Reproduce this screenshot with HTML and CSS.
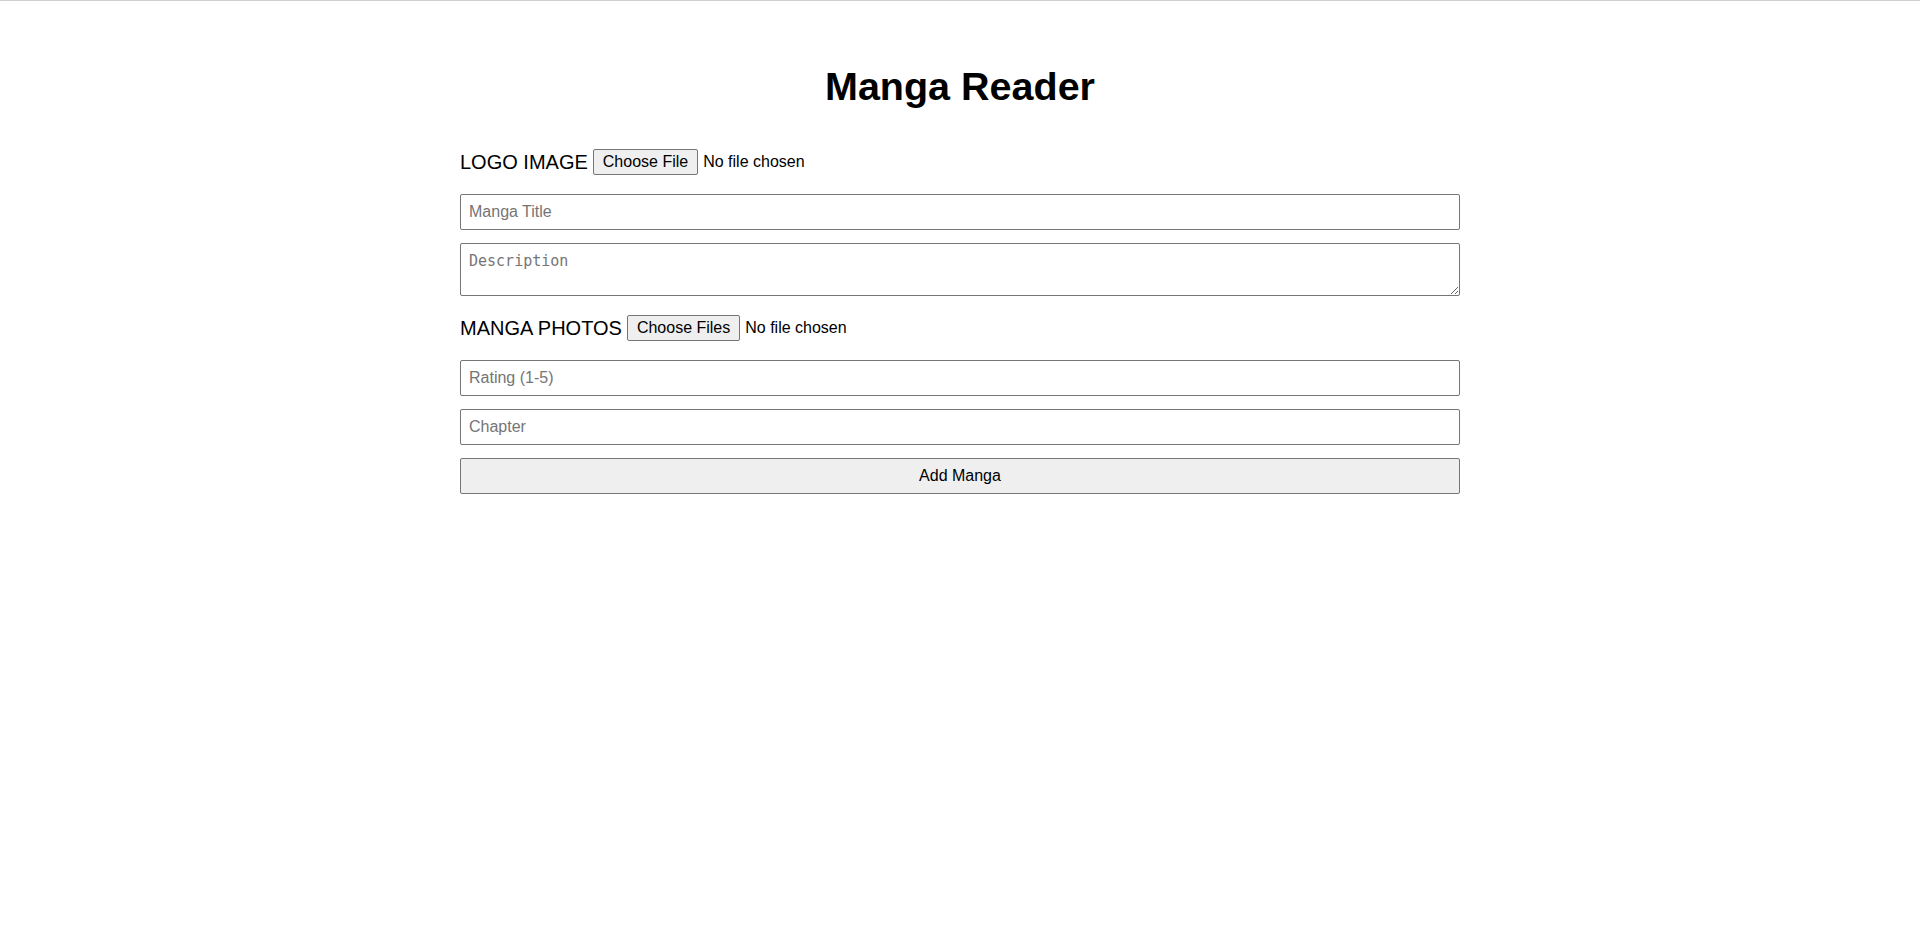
FILE: index.html
```html
<!DOCTYPE html>
<html lang="en">
<head>
<meta charset="utf-8">
<title>Manga Reader</title>
<link rel="stylesheet" href="styles.css">
</head>
<body>
<div class="container">
  <h1 class="title">Manga Reader</h1>
  <form class="manga-form">
    <div class="file-row">
      <label class="file-label" for="logo">LOGO IMAGE</label>
      <input class="file-input" type="file" id="logo">
    </div>
    <input class="field" type="text" placeholder="Manga Title">
    <textarea class="field area" placeholder="Description"></textarea>
    <div class="file-row">
      <label class="file-label" for="photos">MANGA PHOTOS</label>
      <input class="file-input" type="file" id="photos" multiple>
    </div>
    <input class="field" type="text" placeholder="Rating (1-5)">
    <input class="field" type="text" placeholder="Chapter">
    <button class="submit" type="button">Add Manga</button>
  </form>
</div>
</body>
</html>
```

FILE: styles.css
```css
html, body {
  margin: 0;
  padding: 0;
  background: #ffffff;
}

body {
  border-top: 1px solid #cfcfcf;
  font-family: "Liberation Sans", Arial, sans-serif;
  color: #000;
}

.container {
  width: 1000px;
  margin: 0 auto;
  padding-top: 63px;
}

.title {
  margin: 0 0 34px;
  font-size: 39.5px;
  font-weight: bold;
  text-align: center;
}

.manga-form {
  display: flex;
  flex-direction: column;
  gap: 13px;
}

.file-row {
  display: flex;
  align-items: center;
  gap: 5px;
  margin: 6px 0;
}

.file-label {
  font-size: 20px;
}

.file-input {
  font-family: "Liberation Sans", Arial, sans-serif;
  font-size: 16px;
}

.file-input::file-selector-button {
  font-family: "Liberation Sans", Arial, sans-serif;
  font-size: 16px;
  padding: 3px 9px;
  margin-right: 5px;
  background: #efefef;
  border: 1px solid #767676;
  border-radius: 2px;
  color: #000;
}

.field {
  box-sizing: border-box;
  width: 100%;
  padding: 8px;
  margin: 0;
  font-family: "Liberation Sans", Arial, sans-serif;
  font-size: 16px;
  border: 1px solid #767676;
  border-radius: 2px;
  background: #fff;
}

.field::placeholder {
  color: #757575;
}

.area {
  font-family: monospace;
  font-size: 15px;
  height: 53px;
  resize: vertical;
}

.submit {
  box-sizing: border-box;
  width: 100%;
  padding: 8px;
  font-family: "Liberation Sans", Arial, sans-serif;
  font-size: 16px;
  background: #efefef;
  border: 1px solid #767676;
  border-radius: 2px;
  color: #000;
}
```
